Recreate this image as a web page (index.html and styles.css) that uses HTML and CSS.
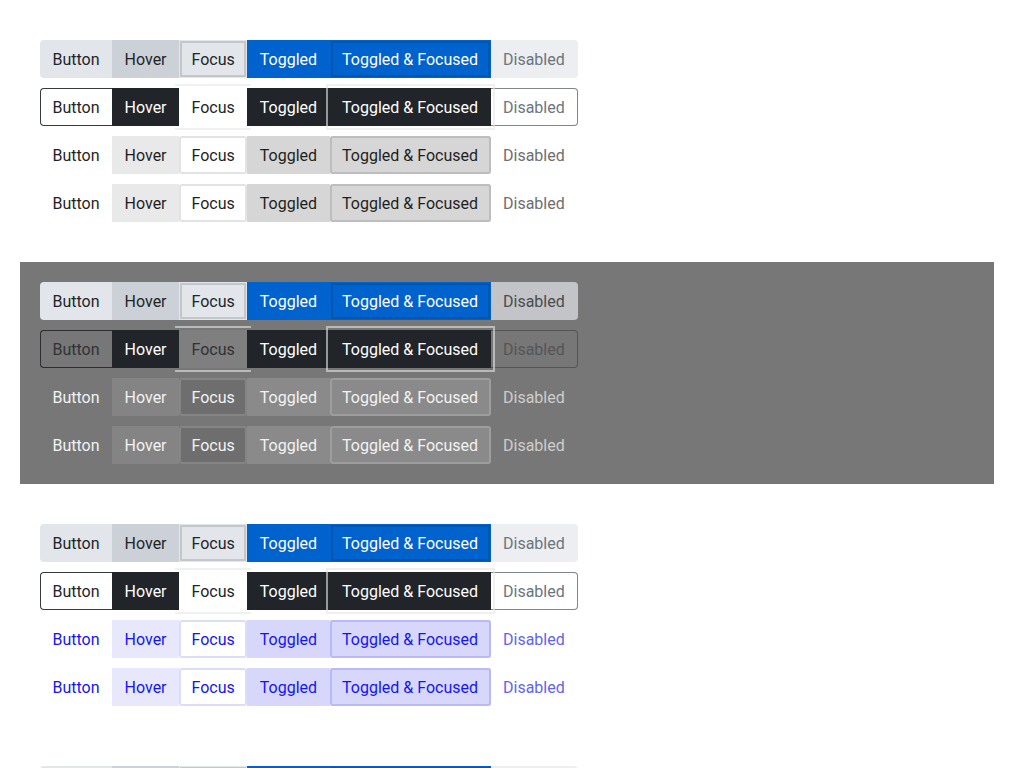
FILE: index.html
```html
<!DOCTYPE html>
<html lang="en">
<head>
<meta charset="utf-8">
<title>Button states</title>
<link rel="stylesheet" href="styles.css">
</head>
<body>
<main class="page">
  <section class="panel">
    <div class="group solid">
      <button class="btn">Button</button><button class="btn is-hover">Hover</button><button class="btn is-focus">Focus</button><button class="btn is-on">Toggled</button><button class="btn is-on is-focus">Toggled &amp; Focused</button><button class="btn" disabled>Disabled</button>
    </div>
    <div class="group outline">
      <button class="btn">Button</button><button class="btn is-hover">Hover</button><button class="btn is-focus">Focus</button><button class="btn is-on">Toggled</button><button class="btn is-on is-focus">Toggled &amp; Focused</button><button class="btn" disabled>Disabled</button>
    </div>
    <div class="group minimal">
      <button class="btn">Button</button><button class="btn is-hover">Hover</button><button class="btn is-focus">Focus</button><button class="btn is-on">Toggled</button><button class="btn is-on is-focus">Toggled &amp; Focused</button><button class="btn" disabled>Disabled</button>
    </div>
    <div class="group minimal">
      <button class="btn">Button</button><button class="btn is-hover">Hover</button><button class="btn is-focus">Focus</button><button class="btn is-on">Toggled</button><button class="btn is-on is-focus">Toggled &amp; Focused</button><button class="btn" disabled>Disabled</button>
    </div>
  </section>

  <section class="panel dark">
    <div class="group solid">
      <button class="btn">Button</button><button class="btn is-hover">Hover</button><button class="btn is-focus">Focus</button><button class="btn is-on">Toggled</button><button class="btn is-on is-focus">Toggled &amp; Focused</button><button class="btn" disabled>Disabled</button>
    </div>
    <div class="group outline">
      <button class="btn">Button</button><button class="btn is-hover">Hover</button><button class="btn is-focus">Focus</button><button class="btn is-on">Toggled</button><button class="btn is-on is-focus">Toggled &amp; Focused</button><button class="btn" disabled>Disabled</button>
    </div>
    <div class="group minimal">
      <button class="btn">Button</button><button class="btn is-hover">Hover</button><button class="btn is-focus">Focus</button><button class="btn is-on">Toggled</button><button class="btn is-on is-focus">Toggled &amp; Focused</button><button class="btn" disabled>Disabled</button>
    </div>
    <div class="group minimal">
      <button class="btn">Button</button><button class="btn is-hover">Hover</button><button class="btn is-focus">Focus</button><button class="btn is-on">Toggled</button><button class="btn is-on is-focus">Toggled &amp; Focused</button><button class="btn" disabled>Disabled</button>
    </div>
  </section>

  <section class="panel">
    <div class="group solid">
      <button class="btn">Button</button><button class="btn is-hover">Hover</button><button class="btn is-focus">Focus</button><button class="btn is-on">Toggled</button><button class="btn is-on is-focus">Toggled &amp; Focused</button><button class="btn" disabled>Disabled</button>
    </div>
    <div class="group outline">
      <button class="btn">Button</button><button class="btn is-hover">Hover</button><button class="btn is-focus">Focus</button><button class="btn is-on">Toggled</button><button class="btn is-on is-focus">Toggled &amp; Focused</button><button class="btn" disabled>Disabled</button>
    </div>
    <div class="group minimal blue">
      <button class="btn">Button</button><button class="btn is-hover">Hover</button><button class="btn is-focus">Focus</button><button class="btn is-on">Toggled</button><button class="btn is-on is-focus">Toggled &amp; Focused</button><button class="btn" disabled>Disabled</button>
    </div>
    <div class="group minimal blue">
      <button class="btn">Button</button><button class="btn is-hover">Hover</button><button class="btn is-focus">Focus</button><button class="btn is-on">Toggled</button><button class="btn is-on is-focus">Toggled &amp; Focused</button><button class="btn" disabled>Disabled</button>
    </div>
  </section>

  <section class="panel">
    <div class="group solid">
      <button class="btn">Button</button><button class="btn is-hover">Hover</button><button class="btn is-focus">Focus</button><button class="btn is-on">Toggled</button><button class="btn is-on is-focus">Toggled &amp; Focused</button><button class="btn" disabled>Disabled</button>
    </div>
  </section>
</main>
</body>
</html>
```
FILE: styles.css
```css
html {
  overflow: hidden;
}
body {
  margin: 0;
  background: #ffffff;
  font-family: Roboto, "Liberation Sans", sans-serif;
}
.page {
  display: flex;
  flex-direction: column;
  gap: 20px;
  padding: 20px 30px 20px 20px;
}
.panel {
  display: flex;
  flex-direction: column;
  gap: 10px;
  padding: 20px;
}
.panel.dark {
  background: #777777;
}
.group {
  display: flex;
  width: max-content;
  isolation: isolate;
}
.btn {
  position: relative;
  box-sizing: border-box;
  height: 38px;
  margin: 0;
  padding: 1px 12.5px 0;
  border: 0;
  font-family: Roboto, "Liberation Sans", sans-serif;
  font-size: 16px;
  line-height: 22px;
  display: flex;
  align-items: center;
  background: transparent;
  color: #212529;
  cursor: default;
}
.btn:disabled {
  padding-right: 13px;
}
.btn.is-on.is-focus {
  z-index: 1;
}

/* solid */
.solid .btn {
  background: #e2e5e9;
  color: #212529;
}
.solid .btn:first-child {
  border-radius: 4px 0 0 4px;
}
.solid .btn:last-child {
  border-radius: 0 4px 4px 0;
}
.solid .btn.is-hover {
  background: #ccd1d8;
}
.solid .btn.is-focus {
  outline: 2px solid rgba(0, 0, 0, 0.13);
  outline-offset: -3px;
}
.solid .btn.is-on {
  background: #0062cc;
  color: #ffffff;
}
.solid .btn:disabled {
  background: #eceef1;
  color: #6c757d;
}
.dark .solid .btn:disabled {
  background: #c3c4c7;
  color: #4a4c4e;
}

/* outline */
.outline .btn {
  background: #ffffff;
  color: #212529;
}
.outline .btn:first-child {
  border: 1px solid #343a40;
  border-right: 0;
  border-radius: 4px 0 0 4px;
  padding-left: 11.5px;
}
.outline .btn:last-child {
  border: 1px solid #80868c;
  border-left: 0;
  border-radius: 0 4px 4px 0;
  padding-right: 12px;
  color: #6c757d;
}
.outline .btn.is-hover,
.outline .btn.is-on {
  background: #212529;
  color: #ffffff;
}
.outline .btn.is-focus::before {
  content: "";
  position: absolute;
  top: -4px;
  bottom: -4px;
  left: -4px;
  right: -4px;
  border-top: 2px solid rgba(230, 230, 230, 0.6);
  border-bottom: 2px solid rgba(230, 230, 230, 0.6);
  pointer-events: none;
}
.outline .btn.is-on.is-focus::before {
  content: none;
}
.outline .btn.is-on.is-focus {
  outline: 2px solid rgba(230, 230, 230, 0.6);
  outline-offset: 2px;
}
.dark .outline .btn {
  background: transparent;
  color: #303236;
}
.dark .outline .btn:first-child {
  border-color: #2c2e31;
}
.dark .outline .btn.is-focus {
  background: #7f7f7f;
}
.dark .outline .btn.is-hover,
.dark .outline .btn.is-on {
  background: #212529;
  color: #ffffff;
}
.dark .outline .btn:last-child {
  border-color: #555555;
  color: #555555;
}

/* minimal */
.minimal .btn {
  color: #1f1f1f;
}
.minimal .btn.is-hover {
  background: #e9e9e9;
}
.minimal .btn.is-focus {
  background: #ffffff;
  border-radius: 3px;
  box-shadow: inset 0 0 0 2px #e3e3e3;
}
.minimal .btn.is-on {
  background: #d6d6d6;
}
.minimal .btn.is-on.is-focus {
  box-shadow: inset 0 0 0 2px #bdbdbd;
}
.minimal .btn:disabled {
  color: #6e6e6e;
}

.dark .minimal .btn {
  color: #f2f2f2;
}
.dark .minimal .btn.is-hover {
  background: #848484;
}
.dark .minimal .btn.is-focus {
  background: #6e6e6e;
  box-shadow: inset 0 0 0 2px #858585;
}
.dark .minimal .btn.is-on {
  background: #8a8a8a;
}
.dark .minimal .btn.is-on.is-focus {
  box-shadow: inset 0 0 0 2px #9d9d9d;
}
.dark .minimal .btn:disabled {
  color: #cdcdcd;
}

/* blue minimal */
.blue .btn {
  color: #1515f0;
}
.blue .btn.is-hover {
  background: #e8e8fd;
}
.blue .btn.is-focus {
  background: #ffffff;
  box-shadow: inset 0 0 0 2px #dcdcfb;
}
.blue .btn.is-on {
  background: #d7d7fb;
}
.blue .btn.is-on.is-focus {
  box-shadow: inset 0 0 0 2px #b9b9f6;
}
.blue .btn:disabled {
  color: #6464ee;
}
```
